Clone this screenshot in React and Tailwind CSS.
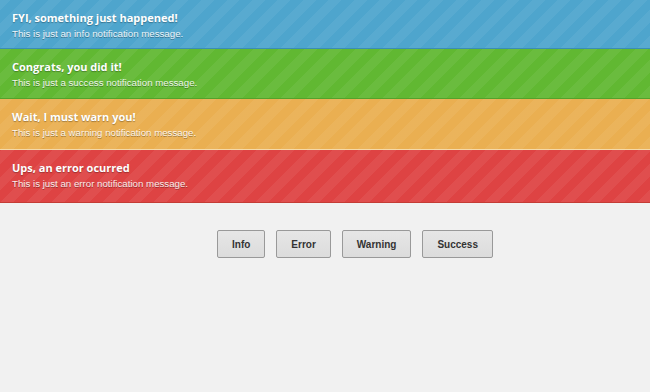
const bars = [
  {
    title: 'FYI, something just happened!',
    text: 'This is just an info notification message.',
    cls: 'bg-[#4ea5cd] border-[#3b8eb5] h-[49px]',
  },
  {
    title: 'Congrats, you did it!',
    text: 'This is just a success notification message.',
    cls: 'bg-[#61b832] border-[#55a12c] h-[50px]',
  },
  {
    title: 'Wait, I must warn you!',
    text: 'This is just a warning notification message.',
    cls: 'bg-[#eaaf51] border-[#f5d9a8] h-[51px]',
  },
  {
    title: 'Ups, an error ocurred',
    text: 'This is just an error notification message.',
    cls: 'bg-[#de4343] border-[#c43c35] h-[53px]',
  },
]

const buttons = ['Info', 'Error', 'Warning', 'Success']

export default function App() {
  return (
    <div className="w-[650px] h-[392px] bg-[#f1f1f1] overflow-hidden font-['Liberation_Sans',Arial,sans-serif]">
      {bars.map((b) => (
        <div
          key={b.title}
          className={`${b.cls} border-b pl-3 pt-[11px] bg-[image:repeating-linear-gradient(-45deg,rgba(255,255,255,0.06)_0px,rgba(255,255,255,0.06)_9px,transparent_9px,transparent_18px)]`}
        >
          <div className="font-['Open_Sans',sans-serif] font-bold text-[11px] leading-[14px] text-white [text-shadow:0_1px_1px_rgba(0,0,0,0.3)]">
            {b.title}
          </div>
          <div className="mt-[2px] text-[9.7px] leading-[14px] text-white/90 [text-shadow:0_1px_0_rgba(0,0,0,0.35)]">
            {b.text}
          </div>
        </div>
      ))}
      <div className="flex gap-[11px] pl-[217px] pt-[27px]">
        {buttons.map((l) => (
          <button
            key={l}
            className="h-[28px] px-[14px] rounded-[2px] border border-[#999] bg-[linear-gradient(#e6e6e6,#dcdcdc)] text-[10px] font-bold text-[#333]"
          >
            {l}
          </button>
        ))}
      </div>
    </div>
  )
}
